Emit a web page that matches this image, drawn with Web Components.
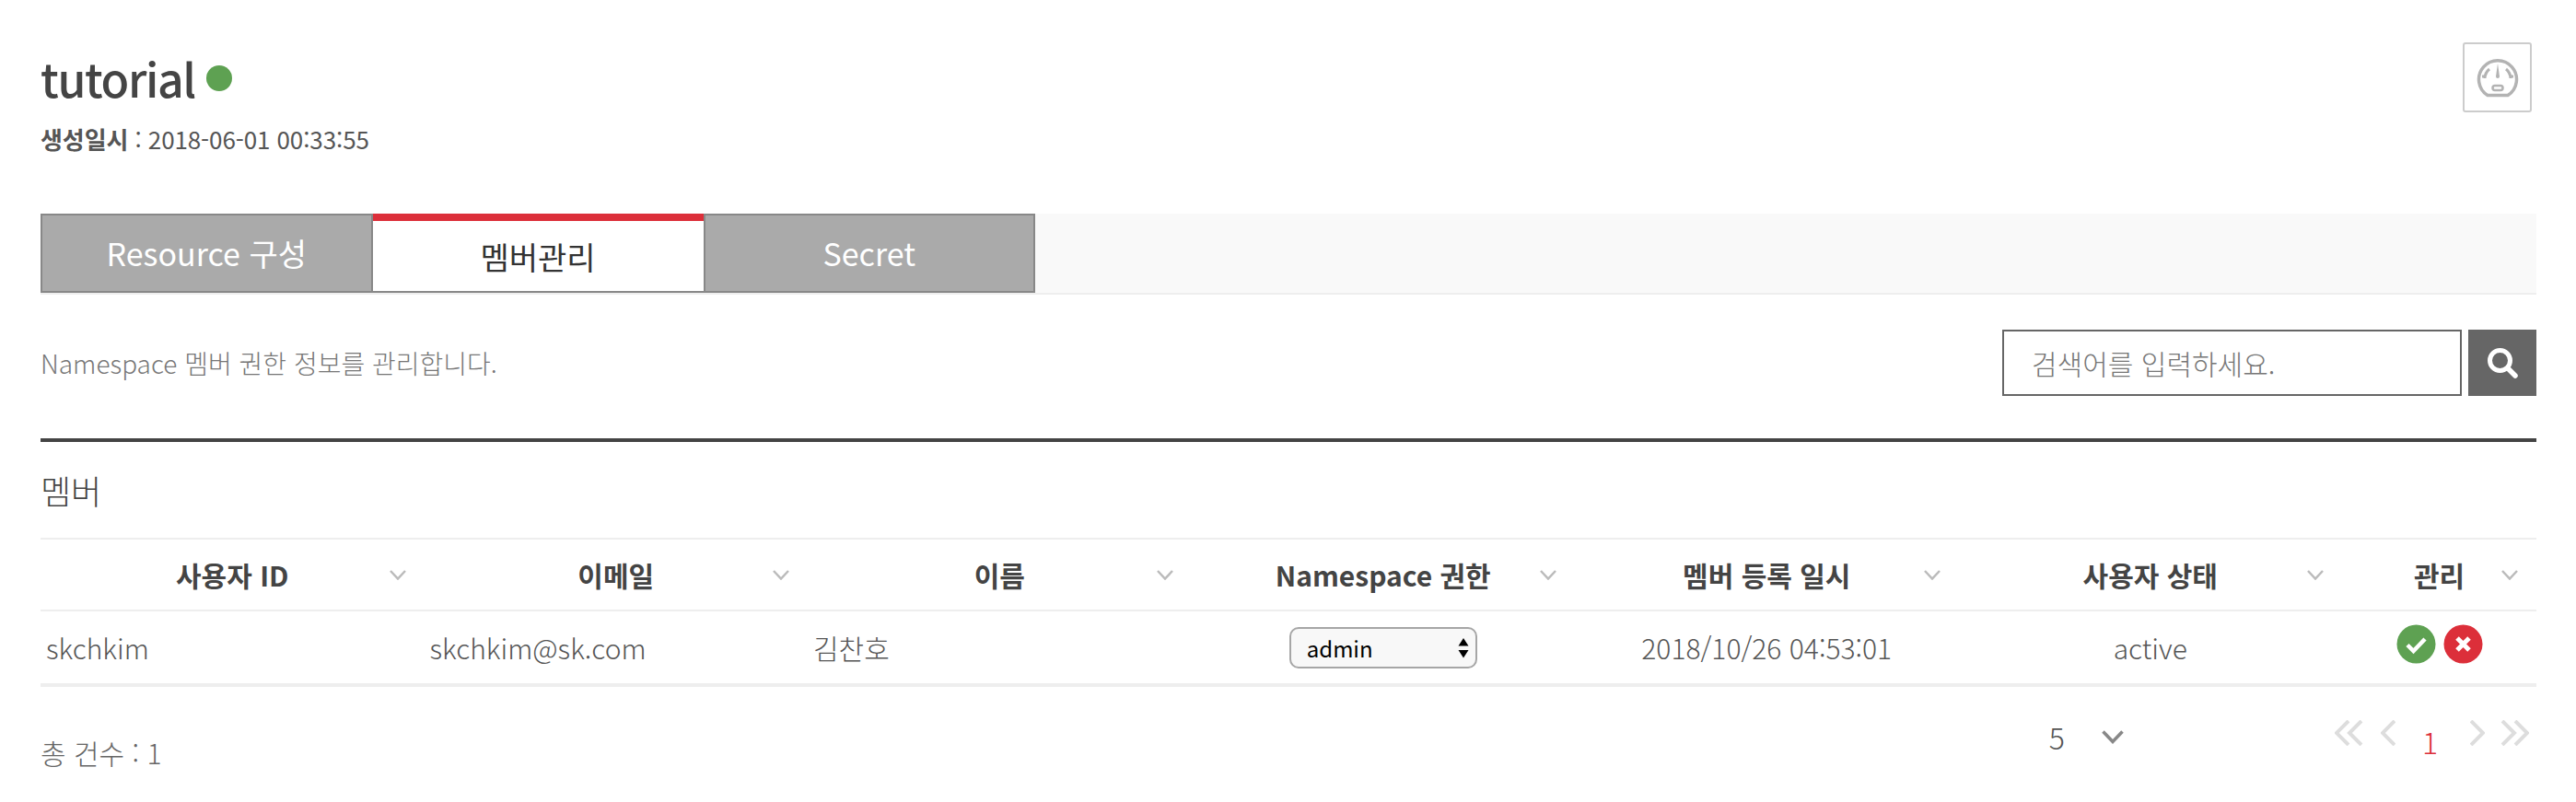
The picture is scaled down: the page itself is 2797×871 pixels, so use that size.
<!DOCTYPE html>
<html lang="ko"><head><meta charset="utf-8"><title>tutorial</title>
<style>
html,body{margin:0;background:#fff}
body{font-family:"Noto Sans CJK KR","Noto Sans",sans-serif;color:#555}
</style></head><body>
<ns-page>
  <ns-header name="tutorial" created="2018-06-01 00:33:55"></ns-header>
  <ns-tabs>
    <ns-tab>Resource 구성</ns-tab>
    <ns-tab active>멤버관리</ns-tab>
    <ns-tab>Secret</ns-tab>
  </ns-tabs>
  <ns-toolbar desc="Namespace 멤버 권한 정보를 관리합니다." placeholder="검색어를 입력하세요."></ns-toolbar>
  <ns-table></ns-table>
  <ns-footer total="1"></ns-footer>
</ns-page>
<script>
const FONT='"Noto Sans CJK KR","Noto Sans",sans-serif';
function def(name,html,init){
  customElements.define(name,class extends HTMLElement{
    connectedCallback(){
      if(this.shadowRoot)return;
      const r=this.attachShadow({mode:'open'});
      r.innerHTML=typeof html==='function'?html(this):html;
    }
  });
}
def('ns-page',`<style>:host{display:block;padding:0 43px 0 44px;box-sizing:border-box;width:2797px;font-family:${FONT}}</style><slot></slot>`);

def('ns-header',h=>`<style>
:host{display:flex;justify-content:space-between;align-items:flex-start;height:232px;padding:46px 5px 0 0;box-sizing:border-box}
.t{display:flex;align-items:center;gap:12px;height:76px}
h1{margin:0;font-size:50px;font-weight:500;color:#444;line-height:76px;letter-spacing:-1.4px}
.dot{width:28px;height:28px;border-radius:50%;background:#5ea152;margin-top:2px}
p{margin:7px 0 0;font-size:26px;line-height:44px;color:#555;letter-spacing:-.1px}
b{font-weight:700}
.box{width:75px;height:76px;box-sizing:border-box;border:2px solid #ccc;border-radius:3px;display:flex;align-items:center;justify-content:center}
</style>
<div><div class="t"><h1>${h.getAttribute('name')}</h1><span class="dot"></span></div>
<p><b>생성일시</b> : ${h.getAttribute('created')}</p></div>
<div class="box"><svg width="46" height="46" viewBox="0 0 46 46" fill="none" stroke="#b3b3b3">
<path d="M12 42.500A20.500 20.500 0 1 1 34 42.500Z" stroke-width="3.500" stroke-linejoin="round"/>
<path d="M9 24a14 14 0 0 1 5-10M37 24a14 14 0 0 0-5-10" stroke-width="3"/>
<path d="M23 8l2 14a2 2 0 0 1-4 0Z" fill="#b3b3b3" stroke="none"/>
<path d="M6 22h4M36 22h4" stroke-width="3"/>
<rect x="17.500" y="32" width="11" height="5" rx="2.500" stroke-width="2.500"/>
</svg></div>`);

def('ns-tabs',`<style>:host{display:flex;height:86px;background:#f9f9f9;border-bottom:2px solid #eee}</style><slot></slot>`);
def('ns-tab',t=>{const a=t.hasAttribute('active');return `<style>
:host{display:flex;align-items:center;justify-content:center;width:${a?359:360.5}px;height:86px;box-sizing:border-box;font-size:34px;
${a?'background:#fff;color:#333;border-top:8px solid #dc2f3a;border-bottom:2px solid #888;':'background:#aaa;color:#fff;border:2px solid #888;padding-bottom:2px;'}}
</style><slot></slot>`});

def('ns-toolbar',t=>`<style>
:host{display:flex;justify-content:space-between;align-items:center;height:160px;padding:0 0 8px;box-sizing:border-box;border-bottom:4px solid #444}
.d{font-size:28px;font-weight:300;color:#777}
.s{display:flex;gap:7px}
input{width:499px;height:72px;box-sizing:border-box;border:2px solid #666;padding:0 30px;font:300 30px ${FONT};color:#555;background:#fff;outline:0;border-radius:0}
input::placeholder{color:#777;opacity:1}
button{width:74px;height:72px;border:0;background:#666;padding:0;display:flex;align-items:center;justify-content:center}
</style>
<span class="d">${t.getAttribute('desc')}</span>
<div class="s"><input placeholder="${t.getAttribute('placeholder')}"><button aria-label="검색"><svg width="36" height="34" viewBox="0 0 36 34" fill="none" stroke="#fff" stroke-linecap="round"><circle cx="15.500" cy="14.500" r="11" stroke-width="5"/><path d="M24 23l8 8" stroke-width="5.500"/></svg></button></div>`);

const chev=`<svg class="c" width="18" height="11" viewBox="0 0 18 11" fill="none" stroke="#bbb" stroke-width="2.500"><path d="M1 1l8 8.500L17 1"/></svg>`;
def('ns-table',()=>{
 const heads=['사용자 ID','이메일','이름','Namespace 권한','멤버 등록 일시','사용자 상태','관리'];
 return `<style>
:host{display:block}
.title{height:104px;display:flex;align-items:center;font-size:36px;color:#444;font-weight:300;line-height:1}
.g{display:grid;grid-template-columns:repeat(6,416.5px) 1fr}
.h{height:76px;display:flex;align-items:center;justify-content:center;position:relative;font-size:30px;font-weight:700;color:#444;border-top:2px solid #eee;border-bottom:2px solid #eee}
.c{position:absolute;right:20px;top:33px}
.b{height:78px;display:flex;align-items:center;font-size:30px;font-weight:300;color:#555;padding:0 6px;box-sizing:border-box;border-bottom:4px solid #eee;height:82px}
.m{justify-content:center}
.sel{position:relative;display:inline-flex}
select{appearance:none;-webkit-appearance:none;width:204px;height:45px;box-sizing:border-box;border:2px solid #a6a6a6;border-radius:10px;background:#f8f8f8;padding:0 0 0 17px;font:400 24px ${FONT};color:#000}
.ar{position:absolute;right:9px;top:12px;pointer-events:none}
.i{display:flex;gap:8px;margin-top:-8px}
</style>
<div class="title">멤버</div>
<div class="g">
${heads.map(x=>`<div class="h">${x}${chev}</div>`).join('')}
<div class="b">skchkim</div><div class="b">skchkim@sk.com</div><div class="b">김찬호</div>
<div class="b m"><span class="sel"><select><option>admin</option></select><svg class="ar" width="12" height="22" viewBox="0 0 12 22"><path d="M6 0l5.500 8.500H.500ZM6 21.500L.500 13h11Z"/></svg></span></div>
<div class="b m">2018/10/26 04:53:01</div><div class="b m">active</div>
<div class="b m"><div class="i">
<svg width="43" height="43" viewBox="0 0 43 43"><circle cx="21.500" cy="21.500" r="21" fill="#5ea152"/><path d="M12 22.500l6.500 6.500L31 16" fill="none" stroke="#fff" stroke-width="4.500"/></svg>
<svg width="43" height="43" viewBox="0 0 43 43"><circle cx="21.500" cy="21.500" r="21" fill="#dc2f3a"/><path d="M15 15l13 13M28 15L15 28" fill="none" stroke="#fff" stroke-width="5"/></svg>
</div></div>
</div>`});

def('ns-footer',f=>`<style>
:host{display:flex;height:121px;box-sizing:border-box;position:relative;align-items:flex-start}
.tot{font-size:30px;font-weight:300;color:#666;margin-top:49px;line-height:44px;flex:1}
.sz{display:flex;align-items:center;gap:40px;font-size:32px;font-weight:300;color:#555;margin-top:32px;line-height:44px;margin-right:229px}
.pg{display:flex;align-items:center;margin-top:36px;margin-right:8px;height:28px}
.n{font-size:32px;color:#dc2f3a;font-weight:300;line-height:44px;position:relative;top:9px;margin:0 35px 0 29px}
svg.a{display:block}
</style>
<div class="tot">총 건수 : ${f.getAttribute('total')}</div>
<div class="sz"><span>5</span><svg width="24" height="15" viewBox="0 0 24 15" fill="none" stroke="#888" stroke-width="3.500"><path d="M1.500 1.500l10.500 11 10.500-11"/></svg></div>
<div class="pg">
<svg class="a" width="31" height="28" viewBox="0 0 31 28" fill="none" stroke="#ddd" stroke-width="4"><path d="M15 1L2 14l13 13M29 1L16 14l13 13"/></svg>
<svg class="a" style="margin-left:19px" width="16" height="28" viewBox="0 0 16 28" fill="none" stroke="#ddd" stroke-width="4"><path d="M15 1L2 14l13 13"/></svg>
<span class="n">1</span>
<svg class="a" width="16" height="28" viewBox="0 0 16 28" fill="none" stroke="#ddd" stroke-width="4"><path d="M1 1l13 13L1 27"/></svg>
<svg class="a" style="margin-left:17px" width="31" height="28" viewBox="0 0 31 28" fill="none" stroke="#ddd" stroke-width="4"><path d="M2 1l13 13L2 27M16 1l13 13L16 27"/></svg>
</div>`);
</script>
</body></html>
